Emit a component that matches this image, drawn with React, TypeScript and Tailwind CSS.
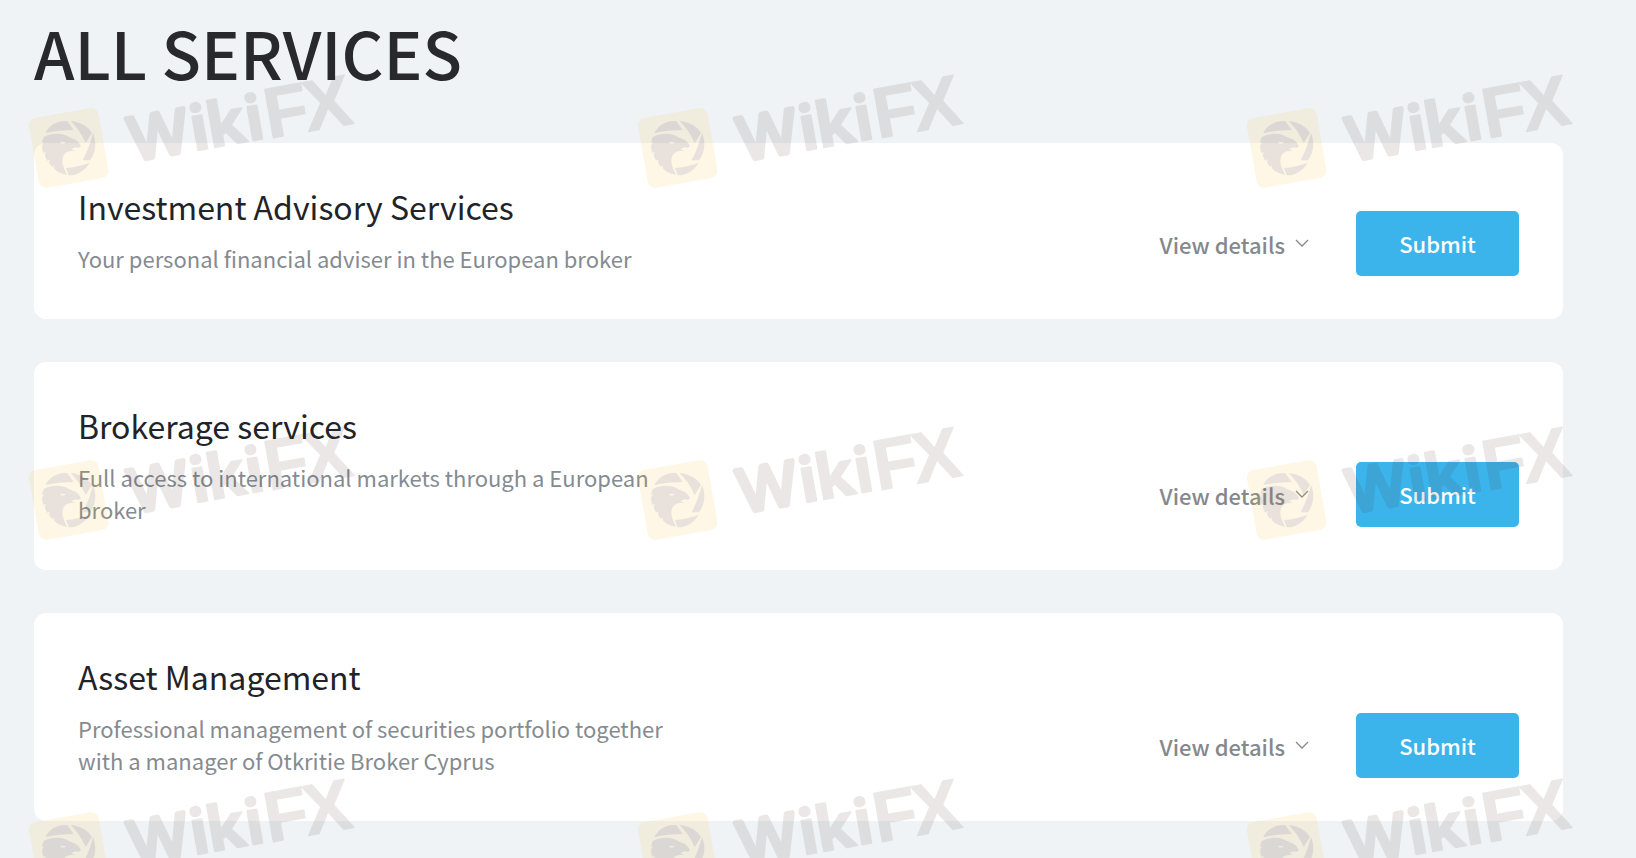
import { useState } from "react";

const services = [
  {
    id: "advisory",
    title: "Investment Advisory Services",
    description: "Your personal financial adviser in the European broker",
  },
  {
    id: "brokerage",
    title: "Brokerage services",
    description: "Full access to international markets through a European broker",
  },
  {
    id: "asset",
    title: "Asset Management",
    description:
      "Professional management of securities portfolio together with a manager of Otkritie Broker Cyprus",
  },
];

function ChevronIcon() {
  return (
    <svg width="14" height="9" viewBox="0 0 14 9" fill="none" aria-hidden="true">
      <path d="M1 1 L7 7 L13 1" stroke="currentColor" strokeWidth="1.3" />
    </svg>
  );
}

function Watermark() {
  return (
    <svg width="400" height="210" viewBox="0 0 400 210" aria-hidden="true">
      {/* Badge */}
      <g transform="translate(21 98) scale(0.3333)">
        <rect
          x="37"
          y="44"
          width="212"
          height="212"
          rx="22"
          transform="rotate(-10 143 150)"
          fill="#f5bc30"
          opacity="0.12"
        />
        <g fill="#302c90" opacity="0.1">
          <path d="M73 105 C86 80 111 67 139 69 L158 96 C128 96 100 100 73 105Z" />
          <path d="M149 69 C181 72 203 88 213 105 L194 135 C184 110 168 89 149 69Z" />
          <path d="M216 105 C228 134 224 164 207 187 L185 187 C198 162 209 134 216 105Z" />
          <path d="M206 194 C190 220 168 232 143 232 L135 210 C160 208 183 203 206 194Z" />
          <path
            fillRule="evenodd"
            d="M68 117 C90 106 122 103 142 116 C155 122 173 125 180 145 L173 150 C165 147 158 149 151 154 L163 160 C145 157 135 160 128 171 C119 188 126 207 138 230 C119 227 107 221 99 211 L98 202 L93 207 L84 194 L86 184 L78 188 L71 171 L75 163 L66 164 L63 143 L69 134 L63 133Z M116 131 L122 137 L131 136 L134 132Z"
          />
        </g>
      </g>
      {/* Wordmark */}
      <g
        transform="translate(131 160) rotate(-10)"
        opacity="0.11"
        fill="#483228"
        stroke="#483228"
        strokeLinejoin="round"
        fontFamily="Liberation Sans, Arial, sans-serif"
      >
        <text x="2" y="1" fontSize="62" strokeWidth="5">
          W
        </text>
        <g fontFamily="Open Sans, sans-serif" fontSize="62" fontWeight="700" strokeWidth="2">
          <text x="63" y="2">i</text>
          <text x="80" y="2">k</text>
          <text x="119" y="2">i</text>
        </g>
        <g fontSize="72" fontWeight="700" strokeWidth="1">
          <text x="139" y="3">F</text>
          <text x="179" y="3">X</text>
        </g>
      </g>
    </svg>
  );
}

function WatermarkLayer() {
  return (
    <div className="pointer-events-none absolute inset-0 grid auto-rows-[352px] grid-cols-[repeat(3,609px)] overflow-hidden">
      {Array.from({ length: 9 }, (_, i) => (
        <Watermark key={i} />
      ))}
    </div>
  );
}

export default function App() {
  const [open, setOpen] = useState<string | null>(null);

  return (
    <main className="relative min-h-screen overflow-hidden bg-[#eff3f6] pt-3 pr-[73px] pb-9 pl-[34px] font-['Noto_Sans_CJK_SC',sans-serif]">
      <h1 className="text-[65px] leading-[80px] font-medium text-[#27292d]">ALL SERVICES</h1>

      {/* Service cards */}
      <div className="mt-[51px] flex flex-col gap-[43px]">
        {services.map((service) => (
          <article
            key={service.id}
            className="flex items-end justify-between gap-8 rounded-xl bg-white px-[44px] py-[43px]"
          >
            <div className="max-w-[590px] pb-[2px]">
              <h2 className="text-[32px] leading-[40px] text-[#212329]">{service.title}</h2>
              <p className="mt-4 text-[22px] leading-[32px] text-[#858b90]">
                {service.description}
              </p>
            </div>

            {/* Actions */}
            <div className="flex shrink-0 items-center gap-[47px]">
              <button
                type="button"
                aria-expanded={open === service.id}
                onClick={() => setOpen(open === service.id ? null : service.id)}
                className="flex items-center gap-[10px] text-[22px] leading-[32px] font-medium text-[#85898d]"
              >
                View details
                <ChevronIcon />
              </button>
              <button
                type="button"
                className="h-[65px] w-[163px] rounded-[5px] bg-[#3bb4ec] text-[22px] font-medium text-white"
              >
                Submit
              </button>
            </div>
          </article>
        ))}
      </div>

      <WatermarkLayer />
    </main>
  );
}
